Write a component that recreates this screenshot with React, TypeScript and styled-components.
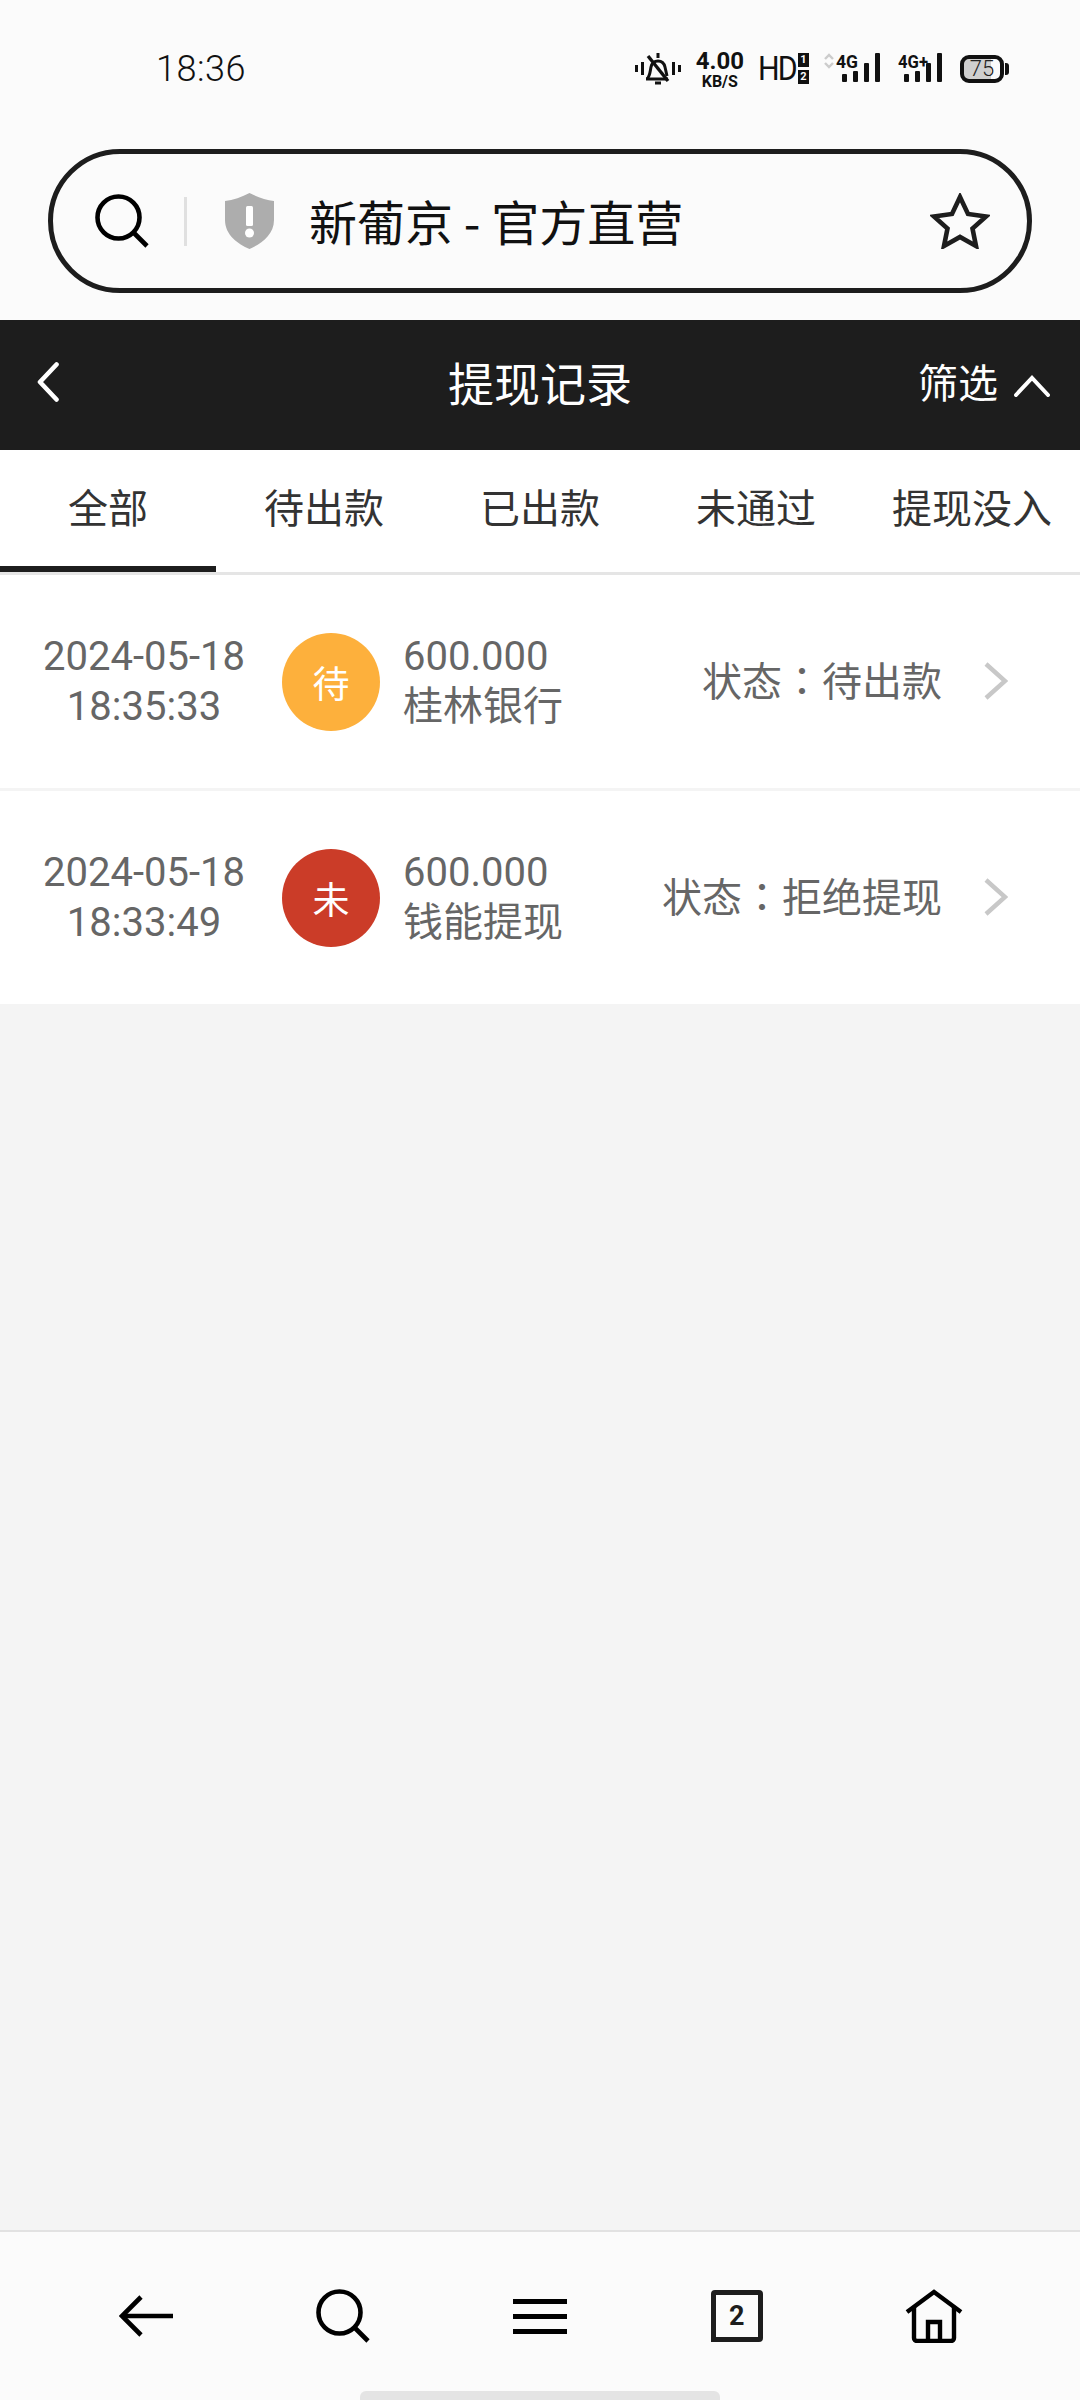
import React from 'react'
import styled, { createGlobalStyle } from 'styled-components'

const GlobalStyle = createGlobalStyle`
  html, body {
    margin: 0;
    padding: 0;
    background: #f4f4f4;
  }
  body {
    font-family: Roboto, "Noto Sans CJK SC", sans-serif;
    overflow: hidden;
  }
`

const Page = styled.div`
  width: 1080px;
  height: 2400px;
  display: flex;
  flex-direction: column;
  background: #f4f4f4;
`

const TopArea = styled.div`
  height: 320px;
  box-sizing: border-box;
  background: #fbfbfb;
  padding: 0 48px;
`

const StatusBar = styled.div`
  height: 149px;
  margin: 0 22px 0 108px;
  padding-bottom: 12px;
  box-sizing: border-box;
  display: flex;
  align-items: center;
  justify-content: space-between;
  color: #111;
`

const Clock = styled.span`
  font-size: 36px;
  font-weight: 300;
  letter-spacing: 0.5px;
  color: #111;
`

const StatusIcons = styled.div`
  display: flex;
  align-items: center;
`

const Speed = styled.div`
  width: 60px;
  margin-left: 9px;
  display: flex;
  flex-direction: column;
  align-items: center;
  gap: 2px;
  font-weight: 700;
  color: #111;
`

const SpeedValue = styled.span`
  font-size: 24px;
  line-height: 24px;
`

const SpeedUnit = styled.span`
  font-size: 16px;
  line-height: 14px;
`

const HdMark = styled.span`
  margin-left: 8px;
  font-size: 33px;
  line-height: 34px;
  letter-spacing: -2px;
  transform: scaleX(0.92);
  transform-origin: left center;
`

const SimStack = styled.div`
  width: 11px;
  margin-left: -1px;
  display: flex;
  flex-direction: column;
  gap: 3px;
`

const SimDigit = styled.span`
  height: 14px;
  background: #111;
  color: #fbfbfb;
  font-size: 11px;
  font-weight: 700;
  line-height: 14px;
  text-align: center;
`

const Signal = styled.svg<{ $gap: number }>`
  display: block;
  margin-top: -4px;
  margin-left: ${({ $gap }) => $gap}px;
`

const Battery = styled.div`
  position: relative;
  width: 44px;
  height: 28px;
  margin-left: 18px;
  margin-right: 6px;
  box-sizing: border-box;
  border: 4px solid #111;
  border-radius: 9px;
  background: linear-gradient(90deg, #cfcfcf 75%, transparent 75%);
  display: flex;
  align-items: center;
  justify-content: center;
  font-size: 22px;
  font-weight: 300;
  color: #222;

  &::after {
    content: '';
    position: absolute;
    right: -9px;
    top: 4px;
    width: 4px;
    height: 12px;
    border-radius: 0 3px 3px 0;
    background: #111;
  }
`

const AddressBar = styled.div`
  height: 144px;
  box-sizing: border-box;
  border: 5px solid #1d1d1d;
  border-radius: 72px;
  padding: 0 37px 0 42px;
  display: flex;
  align-items: center;
`

const AddressDivider = styled.div`
  width: 3px;
  height: 49px;
  margin: 0 38px 0 35px;
  background: #e0e0e0;
`

const AddressText = styled.div`
  flex: 1;
  margin-left: 35px;
  padding-bottom: 3px;
  font-family: "Noto Sans CJK SC", sans-serif;
  font-size: 48px;
  color: #111;
`

const Header = styled.div`
  height: 130px;
  padding: 0 30px;
  display: grid;
  grid-template-columns: 1fr auto 1fr;
  align-items: center;
  background: #1d1d1d;
  color: #fff;
`

const BackIcon = styled.svg`
  display: block;
  margin: -7px 0 0 7px;
`

const Title = styled.div`
  padding-bottom: 8px;
  font-family: "Noto Sans CJK SC", sans-serif;
  font-size: 46px;
`

const Filter = styled.div`
  justify-self: end;
  display: flex;
  align-items: center;
  gap: 16px;
  font-family: "Noto Sans CJK SC", sans-serif;
  font-size: 40px;
`

const FilterLabel = styled.span`
  padding-bottom: 8px;
`

const FilterArrow = styled.svg`
  display: block;
  margin-top: 2px;
`

const Tabs = styled.div`
  display: grid;
  grid-template-columns: repeat(5, 216px);
  background: #fff;
  border-bottom: 3px solid #e5e5e5;
`

const Tab = styled.div<{ $active?: boolean }>`
  height: 122px;
  box-sizing: border-box;
  padding-bottom: 4px;
  display: flex;
  align-items: center;
  justify-content: center;
  font-family: "Noto Sans CJK SC", sans-serif;
  font-size: 40px;
  color: #333;
  border-bottom: 6px solid ${({ $active }) => ($active ? '#1d1d1d' : 'transparent')};
`

const List = styled.div`
  display: flex;
  flex-direction: column;
  gap: 3px;
`

const Row = styled.div`
  height: 213px;
  padding: 0 72px 0 6px;
  display: flex;
  align-items: center;
  background: #fff;
  font-size: 40px;
  line-height: 50px;
  color: #666;
`

const DateCol = styled.div`
  width: 276px;
  text-align: center;
`

const Badge = styled.div<{ $color: string }>`
  width: 98px;
  height: 98px;
  border-radius: 50%;
  flex-shrink: 0;
  display: flex;
  align-items: center;
  justify-content: center;
  background: ${({ $color }) => $color};
  color: #fff;
  font-size: 37px;
  font-family: "Noto Sans CJK SC", sans-serif;
`

const Info = styled.div`
  margin-left: 23px;
`

const StateText = styled.div`
  flex: 1;
  padding-bottom: 6px;
  text-align: right;
  font-family: "Noto Sans CJK SC", sans-serif;
`

const Colon = styled.span`
  font-family: "Noto Sans CJK TC", sans-serif;
`

const RowArrow = styled.svg`
  display: block;
  margin: 0 0 2px 42px;
  flex-shrink: 0;
`

const Spacer = styled.div`
  flex: 1;
`

const BottomBar = styled.div`
  position: relative;
  height: 170px;
  box-sizing: border-box;
  padding: 0 48px;
  display: grid;
  grid-template-columns: repeat(5, 1fr);
  align-items: center;
  justify-items: center;
  background: #fbfbfb;
  border-top: 2px solid #e2e2e2;
`

const TabCount = styled.div`
  width: 52px;
  height: 52px;
  box-sizing: border-box;
  border: 5px solid #1d1d1d;
  border-radius: 4px 4px 4px 0;
  display: flex;
  align-items: center;
  justify-content: center;
  font-size: 27px;
  font-weight: 700;
  color: #1d1d1d;
`

const HomeIndicator = styled.div`
  position: absolute;
  left: 360px;
  bottom: 0;
  width: 360px;
  height: 9px;
  border-radius: 6px 6px 0 0;
  background: #e4e4e4;
`

const SearchIcon = ({ size }: { size: number }) => (
  <svg width={size} height={size} viewBox="0 0 54 54" fill="none" stroke="#000" strokeWidth="4.6">
    <circle cx="23.5" cy="23.5" r="21" />
    <path d="M38.5 38.5 L52 52" />
  </svg>
)

const BellMuted = () => (
  <svg width="46" height="34" viewBox="0 0 46 34" fill="none" stroke="#111" strokeWidth="3">
    <path d="M1.5 13v7M7.5 10v13M44.5 13v7M38.5 10v13" />
    <path d="M12 27c3-3 3-7 4-12 1-4 4-6 7-6s6 2 7 6l2 9" />
    <path d="M11 27h22" />
    <path d="M13 4l20 25" strokeWidth="3.4" />
    <path d="M23 1v5M20 31h6" strokeWidth="3" />
  </svg>
)

const SignalIcon = ({ label, chevrons }: { label: string; chevrons?: boolean }) => {
  const offset = chevrons ? 18 : 6
  const width = offset + 38
  return (
    <Signal $gap={chevrons ? 15 : 18} width={width} height="36" viewBox={`0 -4 ${width} 36`}>
      {chevrons && <path d="M1 6l4-4 4 4M1 10l4 4 4-4" fill="none" stroke="#ccc" strokeWidth="2.4" />}
      <text x={chevrons ? 12 : 0} y="15" fontFamily="Roboto, sans-serif" fontSize="18" fontWeight="700" fill="#111" textLength={label.length > 2 ? 30 : 22} lengthAdjust="spacingAndGlyphs">
        {label}
      </text>
      <rect x={offset} y="21" width="5" height="8" rx="1" fill="#111" />
      <rect x={offset + 11} y="18" width="5" height="11" rx="1" fill="#111" />
      <rect x={offset + 22} y="10" width="5" height="19" rx="1" fill="#111" />
      <rect x={offset + 33} y="0" width="5" height="29" rx="1" fill="#111" />
    </Signal>
  )
}

const rows = [
  { date: '2024-05-18', time: '18:35:33', mark: '待', color: '#fdb03c', bank: '桂林银行', state: '待出款' },
  { date: '2024-05-18', time: '18:33:49', mark: '未', color: '#cb3c28', bank: '钱能提现', state: '拒绝提现' },
]

const tabs = ['全部', '待出款', '已出款', '未通过', '提现没入']

export default function App() {
  return (
    <Page>
      <GlobalStyle />
      <TopArea>
        <StatusBar>
          <Clock>18:36</Clock>
          <StatusIcons>
            <BellMuted />
            <Speed>
              <SpeedValue>4.00</SpeedValue>
              <SpeedUnit>KB/S</SpeedUnit>
            </Speed>
            <HdMark>HD</HdMark>
            <SimStack>
              <SimDigit>1</SimDigit>
              <SimDigit>2</SimDigit>
            </SimStack>
            <SignalIcon label="4G" chevrons />
            <SignalIcon label="4G+" />
            <Battery>75</Battery>
          </StatusIcons>
        </StatusBar>
        <AddressBar>
          <SearchIcon size={54} />
          <AddressDivider />
          <svg width="49" height="56" viewBox="0 0 49 56">
            <path d="M24.5 0C32 4 41 7 49 8v19c0 15-13 24-24.5 29C13 51 0 42 0 27V8c8-1 17-4 24.5-8z" fill="#adadad" />
            <rect x="21" y="13" width="7" height="20" rx="1.5" fill="#fff" />
            <circle cx="24.5" cy="40" r="4.5" fill="#fff" />
          </svg>
          <AddressText>新葡京 - 官方直营</AddressText>
          <svg width="60" height="56" viewBox="0 0 60 56" fill="none" stroke="#1d1d1d" strokeWidth="4.6">
            <path d="M30 4l8 17 18 2.500-13.500 12 3.500 17.500-16-9-16 9 3.500-17.500L4 23.500 22 21z" />
          </svg>
        </AddressBar>
      </TopArea>
      <Header>
        <BackIcon width="22" height="40" viewBox="0 0 22 40" fill="none" stroke="#fff" strokeWidth="4.6" strokeLinecap="round" strokeLinejoin="round">
          <path d="M19.500 2.500L3 20l16.500 17.500" />
        </BackIcon>
        <Title>提现记录</Title>
        <Filter>
          <FilterLabel>筛选</FilterLabel>
          <FilterArrow width="36" height="22" viewBox="0 0 36 22" fill="none" stroke="#fff" strokeWidth="4" strokeLinecap="round">
            <path d="M2 20L18 3l16 17" />
          </FilterArrow>
        </Filter>
      </Header>
      <Tabs>
        {tabs.map((tab, i) => (
          <Tab key={tab} $active={i === 0}>
            {tab}
          </Tab>
        ))}
      </Tabs>
      <List>
        {rows.map((row) => (
          <Row key={row.time}>
            <DateCol>
              <div>{row.date}</div>
              <div>{row.time}</div>
            </DateCol>
            <Badge $color={row.color}>{row.mark}</Badge>
            <Info>
              <div>600.000</div>
              <div>{row.bank}</div>
            </Info>
            <StateText>
              状态<Colon>：</Colon>
              {row.state}
            </StateText>
            <RowArrow width="24" height="38" viewBox="0 0 24 38" fill="none" stroke="#c8c8c8" strokeWidth="4.4">
              <path d="M2 2l19 17L2 36" />
            </RowArrow>
          </Row>
        ))}
      </List>
      <Spacer />
      <BottomBar>
        <svg width="54" height="42" viewBox="0 0 54 42" fill="none" stroke="#000" strokeWidth="4.600">
          <path d="M54 21H4" />
          <path d="M22 2L3 21l19 19" />
        </svg>
        <SearchIcon size={54} />
        <svg width="54" height="38" viewBox="0 0 54 38" fill="#000">
          <rect y="2" width="54" height="5" />
          <rect y="17" width="54" height="5" />
          <rect y="32" width="54" height="5" />
        </svg>
        <TabCount>2</TabCount>
        <svg width="58" height="54" viewBox="0 0 58 54" fill="none" stroke="#000" strokeWidth="4.400">
          <path d="M2 23L29 3l27 20" />
          <path d="M9 18v31a3 3 0 0 0 3 3h34a3 3 0 0 0 3-3V18" />
          <path d="M23 52V33h12v19" />
        </svg>
        <HomeIndicator />
      </BottomBar>
    </Page>
  )
}
